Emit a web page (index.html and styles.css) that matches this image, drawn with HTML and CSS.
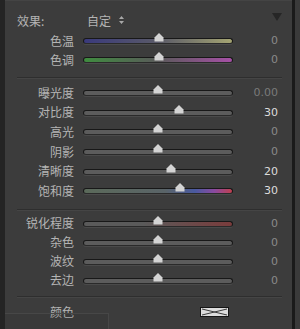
FILE: index.html
```html
<!DOCTYPE html>
<html lang="zh-CN">
<head>
    <meta charset="UTF-8">
    <title>效果</title>
    <link rel="stylesheet" href="styles.css">
</head>
<body>
    <div class="frame">
        <div class="edge-left"></div>
        <div class="panel">
            <div class="header">
                <span class="effect-label">效果:</span>
                <span class="preset">自定
                    <svg class="updown" width="5" height="8" viewBox="0 0 5 8"><path d="M2.5 0 L5 3 H0 Z M0 5 H5 L2.5 8 Z" fill="#a8a8a8"/></svg>
                </span>
                <svg class="collapse" width="10" height="8" viewBox="0 0 10 8"><path d="M0 0 H10 L5 8 Z" fill="#262626"/></svg>
            </div>

            <div class="group first">
                <div class="row"><span class="label">色温</span><div class="track temp"><svg class="thumb" style="left:51%" width="10" height="9" viewBox="0 0 10 9"><path d="M5 0 L9.5 4.5 V8.5 H0.5 V4.5 Z" fill="#d4d4d4"/></svg></div><span class="value">0</span></div>
                <div class="row"><span class="label">色调</span><div class="track tint"><svg class="thumb" style="left:51%" width="10" height="9" viewBox="0 0 10 9"><path d="M5 0 L9.5 4.5 V8.5 H0.5 V4.5 Z" fill="#d4d4d4"/></svg></div><span class="value">0</span></div>
            </div>

            <div class="divider"></div>

            <div class="group tall">
                <div class="row"><span class="label">曝光度</span><div class="track"><svg class="thumb" style="left:50%" width="10" height="9" viewBox="0 0 10 9"><path d="M5 0 L9.5 4.5 V8.5 H0.5 V4.5 Z" fill="#d4d4d4"/></svg></div><span class="value dim">0.00</span></div>
                <div class="row"><span class="label">对比度</span><div class="track"><svg class="thumb" style="left:64%" width="10" height="9" viewBox="0 0 10 9"><path d="M5 0 L9.5 4.5 V8.5 H0.5 V4.5 Z" fill="#d4d4d4"/></svg></div><span class="value on">30</span></div>
                <div class="row"><span class="label">高光</span><div class="track"><svg class="thumb" style="left:50%" width="10" height="9" viewBox="0 0 10 9"><path d="M5 0 L9.5 4.5 V8.5 H0.5 V4.5 Z" fill="#d4d4d4"/></svg></div><span class="value">0</span></div>
                <div class="row"><span class="label">阴影</span><div class="track"><svg class="thumb" style="left:50%" width="10" height="9" viewBox="0 0 10 9"><path d="M5 0 L9.5 4.5 V8.5 H0.5 V4.5 Z" fill="#d4d4d4"/></svg></div><span class="value">0</span></div>
                <div class="row"><span class="label">清晰度</span><div class="track"><svg class="thumb" style="left:59%" width="10" height="9" viewBox="0 0 10 9"><path d="M5 0 L9.5 4.5 V8.5 H0.5 V4.5 Z" fill="#d4d4d4"/></svg></div><span class="value on">20</span></div>
                <div class="row"><span class="label">饱和度</span><div class="track sat"><svg class="thumb" style="left:65%" width="10" height="9" viewBox="0 0 10 9"><path d="M5 0 L9.5 4.5 V8.5 H0.5 V4.5 Z" fill="#d4d4d4"/></svg></div><span class="value on">30</span></div>
            </div>

            <div class="divider mid"></div>

            <div class="group">
                <div class="row"><span class="label">锐化程度</span><div class="track sharp"><svg class="thumb" style="left:50%" width="10" height="9" viewBox="0 0 10 9"><path d="M5 0 L9.5 4.5 V8.5 H0.5 V4.5 Z" fill="#d4d4d4"/></svg></div><span class="value">0</span></div>
                <div class="row"><span class="label">杂色</span><div class="track"><svg class="thumb" style="left:50%" width="10" height="9" viewBox="0 0 10 9"><path d="M5 0 L9.5 4.5 V8.5 H0.5 V4.5 Z" fill="#d4d4d4"/></svg></div><span class="value">0</span></div>
                <div class="row"><span class="label">波纹</span><div class="track"><svg class="thumb" style="left:50%" width="10" height="9" viewBox="0 0 10 9"><path d="M5 0 L9.5 4.5 V8.5 H0.5 V4.5 Z" fill="#d4d4d4"/></svg></div><span class="value">0</span></div>
                <div class="row"><span class="label">去边</span><div class="track"><svg class="thumb" style="left:50%" width="10" height="9" viewBox="0 0 10 9"><path d="M5 0 L9.5 4.5 V8.5 H0.5 V4.5 Z" fill="#d4d4d4"/></svg></div><span class="value">0</span></div>
            </div>

            <div class="divider low"></div>

            <div class="row color-row">
                <span class="label">颜色</span>
                <svg class="swatch" width="29" height="10" viewBox="0 0 29 10"><rect x="0.5" y="0.5" width="28" height="9" fill="#dcdcdc" stroke="#151515"/><path d="M2 2 L27 8 M2 8 L27 2" stroke="#3a3a3a" stroke-width="1"/></svg>
                <span></span>
            </div>

            <div class="bottom-box"></div>
        </div>
        <div class="edge-right"></div>
    </div>
</body>
</html>
```

FILE: styles.css
```css
body {
    margin: 0;
    background: #3b3b3b;
    font-family: "Noto Sans CJK SC", "Liberation Sans", sans-serif;
    font-size: 12px;
    color: #b4b4b4;
    overflow: hidden;
}

.frame {
    display: flex;
    height: 329px;
}

.frame::after {
    content: "";
    width: 5px;
    background: #3a3a3a;
}

.edge-left {
    width: 5px;
    background: #242424;
}

.edge-right {
    width: 3px;
    background: #1a1a1a;
}

.panel {
    position: relative;
    width: 287px;
    background: #3c3c3c;
    border-top: 1px solid #444;
}

/* 效果 header */
.header {
    display: flex;
    align-items: center;
    height: 20px;
    padding: 9px 0 0 12px;
}

.effect-label {
    width: 70px;
}

.preset {
    display: flex;
    align-items: center;
    gap: 8px;
}

.collapse {
    margin-left: auto;
    margin-right: 10px;
    margin-top: -6px;
}

/* slider rows */
.group.first {
    margin-top: 1px;
}

.row {
    display: grid;
    grid-template-columns: 69px 150px 36px;
    column-gap: 9px;
    align-items: center;
    height: 19px;
}

.group.tall {
    margin-top: -1px;
}

.group.tall .row {
    height: 19.6px;
}

.label {
    text-align: right;
    line-height: 1;
}

.value {
    text-align: right;
    font-family: "DejaVu Sans", "Liberation Sans", sans-serif;
    font-size: 11px;
    color: #8a8a8a;
    line-height: 1;
}

.value.dim {
    color: #7a7a7a;
}

.value.on {
    color: #dcdcdc;
}

.track {
    position: relative;
    height: 4px;
    border-radius: 3px;
    background: #5c5c5c;
    border: 1px solid #181818;
    border-bottom-color: #2a2a2a;
    box-shadow: 0 1px 0 #4a4a4a;
    margin-top: 1px;
}

.track.temp {
    background: linear-gradient(to right, #3a3a7c, #5a5a68 50%, #a4a472);
}

.track.tint {
    background: linear-gradient(to right, #3f8c3f, #5a5a5a 50%, #a650a6);
}

.track.sat {
    background: linear-gradient(to right, #5b6a5a, #5a6468 55%, #4a5aa0 75%, #8a4aa0 88%, #c04050);
}

.track.sharp {
    background: linear-gradient(to right, #5a5a5a 40%, #7a3c3c);
}

.thumb {
    position: absolute;
    top: -6px;
    transform: translateX(-50%);
}

/* dividers */
.divider {
    height: 0;
    margin: 8px 10px 5px 12px;
    border-top: 1px solid #2e2e2e;
    border-bottom: 1px solid #454545;
}

.divider.mid {
    margin: 8px 10px 3px 12px;
}

.divider.low {
    margin: 6px 10px 5px 12px;
}

.swatch {
    justify-self: end;
    margin-right: 4px;
}

.bottom-box {
    position: absolute;
    left: 0;
    top: 312px;
    width: 103px;
    height: 20px;
    border-top: 1px solid #474747;
    border-right: 1px solid #474747;
    background: rgba(0, 0, 0, 0.04);
}
```
